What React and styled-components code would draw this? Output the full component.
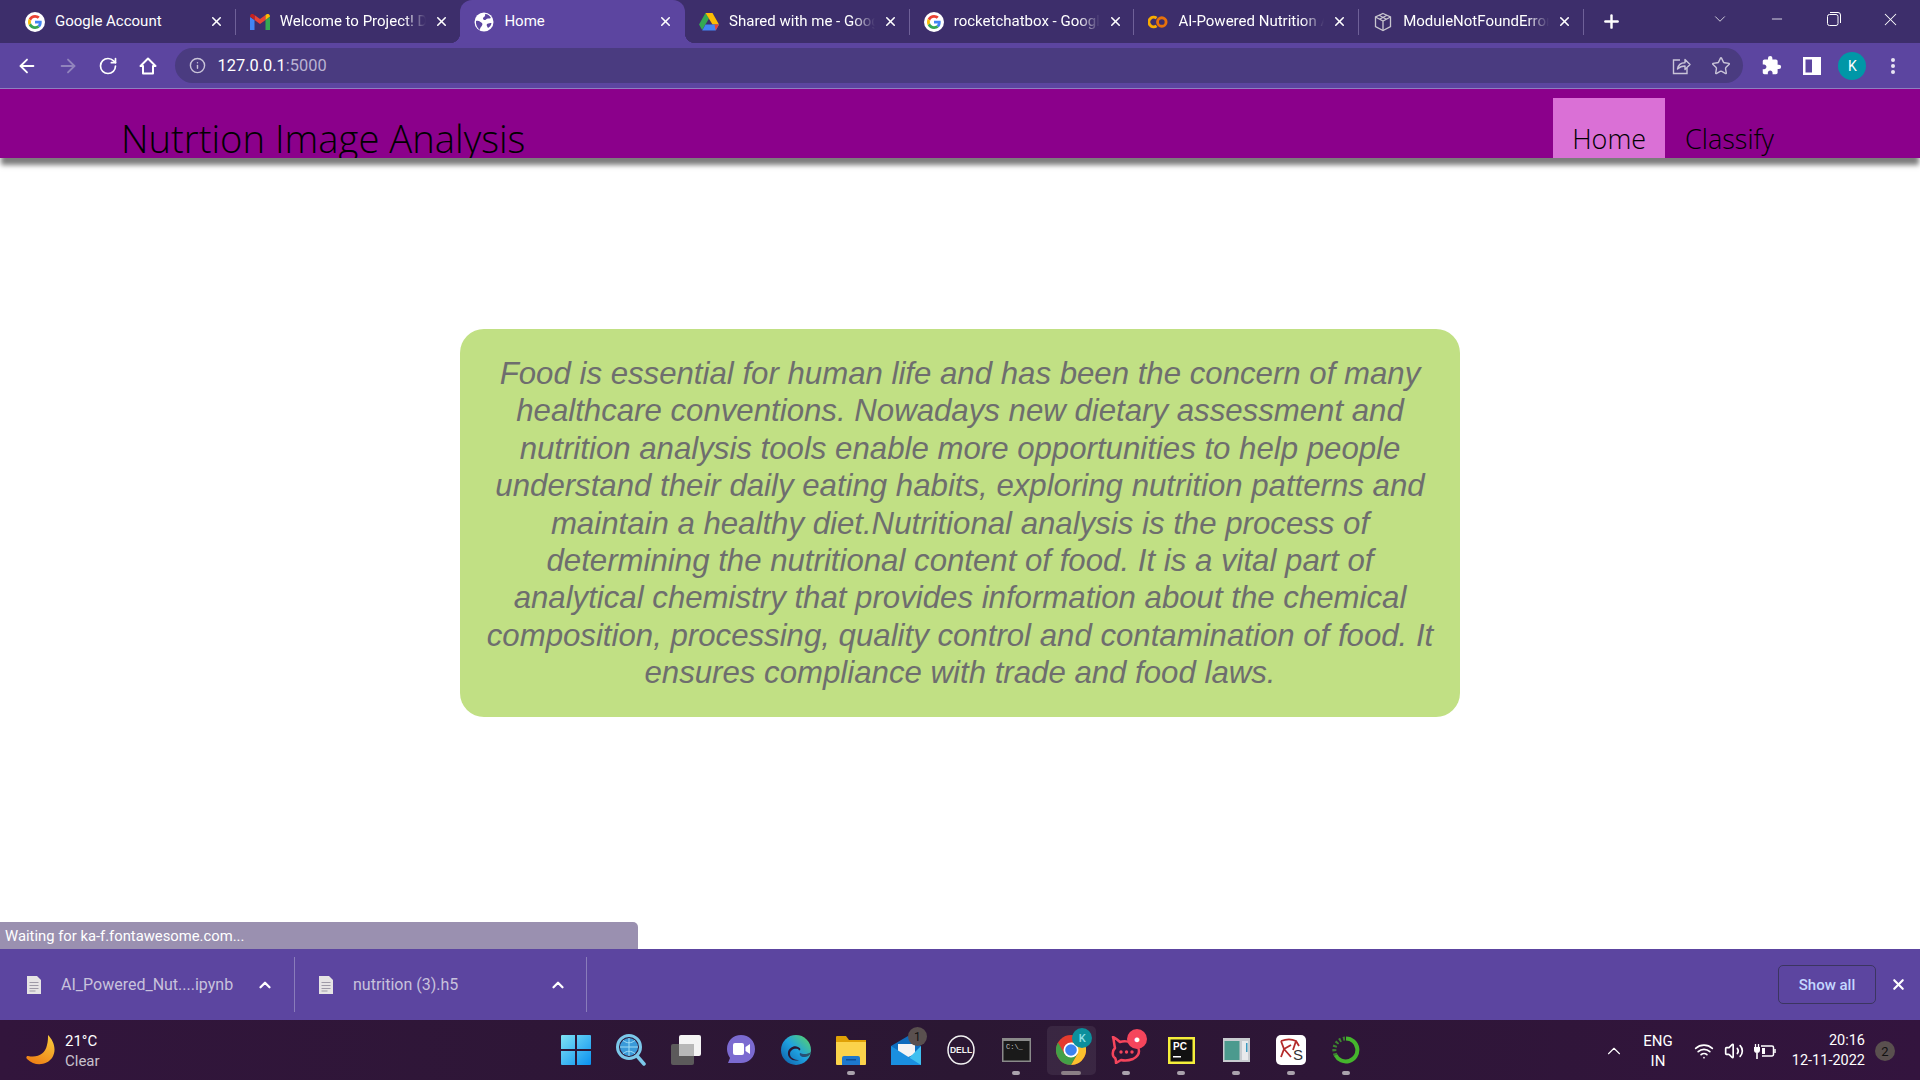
import React from 'react'
import styled, { createGlobalStyle } from 'styled-components'
import { ArrowLeft, ArrowRight, RotateCw, Info, Star, X, Plus, ChevronDown, ChevronUp, Minus, Wifi, Volume2 } from 'lucide-react'
import { MdExtension } from 'react-icons/md'

const GlobalStyle = createGlobalStyle`
  html, body {
    margin: 0;
    padding: 0;
    overflow: hidden;
  }
  * {
    box-sizing: border-box;
  }
`

const Screen = styled.div`
  width: 1920px;
  height: 1080px;
  display: flex;
  flex-direction: column;
  background: #fff;
  font-family: Roboto, "Noto Sans", sans-serif;
  overflow: hidden;
`

/* browser chrome */

const TabStrip = styled.div`
  height: 43px;
  flex: none;
  display: flex;
  padding-left: 11px;
  background: #3d2e6b;
  color: #fff;
`

const Tab = styled.div`
  position: relative;
  width: 224.7px;
  height: 43px;
  flex: none;
  display: flex;
  align-items: center;
  padding-left: 14px;
  background: ${p => (p.$active ? '#5c45a0' : 'transparent')};
  border-radius: ${p => (p.$active ? '12px 12px 0 0' : '0')};
  z-index: ${p => (p.$active ? 1 : 0)};

  &::after {
    content: ${p => (p.$sep ? "''" : 'none')};
    position: absolute;
    right: 0;
    top: 9px;
    height: 26px;
    width: 1px;
    background: #6f6198;
  }

  &::before {
    content: ${p => (p.$active ? "''" : 'none')};
    position: absolute;
    left: -10px;
    right: -10px;
    bottom: 0;
    height: 10px;
    background:
      radial-gradient(circle at 0 0, transparent 10px, #5c45a0 10.5px) left / 10px 10px no-repeat,
      radial-gradient(circle at 100% 0, transparent 10px, #5c45a0 10.5px) right / 10px 10px no-repeat;
  }
`

const Favicon = styled.span`
  width: 20px;
  height: 20px;
  flex: none;
  display: flex;
  align-items: center;
  justify-content: center;
`

const TabTitle = styled.span`
  margin-left: 10px;
  width: 146px;
  flex: none;
  font-size: 15px;
  line-height: 20px;
  margin-top: -2px;
  white-space: nowrap;
  overflow: hidden;
  ${p => p.$fade && `
    -webkit-mask-image: linear-gradient(90deg, #000 85%, transparent 100%);
    mask-image: linear-gradient(90deg, #000 85%, transparent 100%);
  `}
`

const TabClose = styled.span`
  margin-left: 8px;
  display: flex;
  color: #fff;
`

const PlusButton = styled.div`
  width: 56px;
  display: flex;
  align-items: center;
  justify-content: center;
`

const WindowControls = styled.div`
  margin-left: auto;
  margin-right: 1px;
  display: flex;
  height: 38px;
`

const WindowButton = styled.div`
  width: 57px;
  display: flex;
  align-items: center;
  justify-content: center;
`

const Toolbar = styled.div`
  height: 46px;
  flex: none;
  display: flex;
  align-items: center;
  padding: 0 7px;
  background: #5c45a0;
  border-bottom: 1px solid #8f7fc0;
  color: #fff;
`

const ToolButton = styled.div`
  width: 40.4px;
  flex: none;
  display: flex;
  justify-content: center;
  color: ${p => (p.$dim ? '#9184bd' : '#fff')};
`

const Omnibox = styled.div`
  flex: 1;
  height: 35px;
  margin: 0 8px 0 6px;
  display: flex;
  align-items: center;
  padding: 0 12px 0 14px;
  border-radius: 18px;
  background: #4a3b80;
`

const SiteInfo = styled.span`
  display: flex;
  color: #c9c4d8;
`

const Url = styled.span`
  margin-left: 12px;
  font-size: 16.4px;
  color: #fff;
`

const UrlPort = styled.span`
  color: #b9b2d2;
`

const OmniActions = styled.div`
  margin-left: auto;
  display: flex;
  gap: 20px;
  color: #c9c4d8;
`

const Avatar = styled.div`
  width: 28px;
  height: 28px;
  border-radius: 50%;
  background: #0097a7;
  display: flex;
  align-items: center;
  justify-content: center;
  font-size: 14px;
  color: #fff;
`

/* the page itself */

const Header = styled.header`
  position: relative;
  z-index: 2;
  height: 69px;
  flex: none;
  display: flex;
  align-items: flex-end;
  justify-content: space-between;
  padding: 0 126px 0 121px;
  background: #8b008b;
  box-shadow: 0 8px 5px -1px #7c7c7c;
  color: #000;
  font-family: "Open Sans", "Noto Sans", sans-serif;
`

const Brand = styled.div`
  height: 60px;
  overflow: hidden;
  font-size: 38.2px;
  font-weight: 300;
  line-height: 80px;
  white-space: nowrap;
`

const Nav = styled.nav`
  display: flex;
`

const NavItem = styled.a`
  height: 60px;
  padding: 0 ${p => (p.$active ? 19 : 20)}px;
  background: ${p => (p.$active ? '#da70d6' : 'transparent')};
  font-size: 27px;
  font-weight: 300;
  line-height: 81px;
  overflow: hidden;
`

const Page = styled.main`
  position: relative;
  flex: 1;
  display: flex;
  justify-content: center;
  align-items: flex-start;
  padding-top: 171px;
`

const Card = styled.section`
  width: 1000px;
  height: 388px;
  padding: 26px 20px;
  border-radius: 24px;
  background: #c1e084;
  color: #6e6e6e;
  font-family: "Liberation Sans", Arial, sans-serif;
  font-size: 31.2px;
  font-style: italic;
  line-height: 37.4px;
  text-align: center;
`

const StatusBubble = styled.div`
  position: absolute;
  left: 0;
  bottom: 0;
  width: 638px;
  height: 27px;
  padding-left: 5px;
  display: flex;
  align-items: center;
  border-radius: 0 5px 0 0;
  background: #9a90b0;
  color: #fff;
  font-size: 14.8px;
`

/* download shelf */

const Shelf = styled.div`
  height: 71px;
  flex: none;
  display: flex;
  align-items: center;
  background: #5c45a0;
  color: #fff;
`

const DownloadItem = styled.div`
  width: ${p => p.$width}px;
  height: 55px;
  flex: none;
  display: flex;
  align-items: center;
  padding-left: ${p => p.$pad}px;
  border-right: 1px solid #8a7cbb;
`

const FileName = styled.span`
  margin-left: 20px;
  width: ${p => p.$width}px;
  font-size: 16px;
  color: #c8c2dc;
  white-space: nowrap;
`

const ShelfChevron = styled.span`
  display: flex;
  color: #fff;
`

const ShowAll = styled.button`
  margin-left: auto;
  width: 98px;
  height: 39px;
  border: 1px solid #3b3560;
  border-radius: 5px;
  background: transparent;
  color: #c4d7ff;
  font-family: Roboto, sans-serif;
  font-size: 15px;
  font-weight: 500;
`

const ShelfClose = styled.span`
  width: 44px;
  display: flex;
  justify-content: center;
`

/* windows taskbar */

const Taskbar = styled.footer`
  height: 60px;
  flex: none;
  display: grid;
  grid-template-columns: 1fr auto 1fr;
  align-items: center;
  background: linear-gradient(90deg, #32153c, #2b1733 50%, #33143e);
  color: #fff;
`

const Weather = styled.div`
  display: flex;
  align-items: center;
  padding-left: 26px;
  gap: 9px;
`

const WeatherText = styled.div`
  font-size: 15px;
  line-height: 20px;
  padding-top: 2px;
`

const WeatherSub = styled.div`
  color: #c9c2cc;
`

const Dock = styled.div`
  display: flex;
  padding-left: 2px;
`

const DockSlot = styled.div`
  position: relative;
  width: 55.07px;
  height: 49px;
  display: flex;
  align-items: center;
  justify-content: center;

  &::before {
    content: ${p => (p.$focused ? "''" : 'none')};
    position: absolute;
    left: 3px;
    right: 3px;
    top: 0;
    bottom: 0;
    border-radius: 5px;
    background: rgba(255, 255, 255, 0.07);
  }

  &::after {
    content: ${p => (p.$running || p.$focused ? "''" : 'none')};
    position: absolute;
    left: 50%;
    bottom: 0;
    width: ${p => (p.$focused ? 20 : 8)}px;
    height: 4px;
    transform: translateX(-50%);
    border-radius: 2px;
    background: ${p => (p.$focused ? '#8b7f86' : '#aaa2ad')};
  }
`

const IconWrap = styled.span`
  position: relative;
  display: flex;
`

const CountBadge = styled.span`
  position: absolute;
  top: -8px;
  right: -6px;
  width: 19px;
  height: 19px;
  border-radius: 50%;
  background: #5a504f;
  color: #111;
  font-size: 12px;
  display: flex;
  align-items: center;
  justify-content: center;
`

const AppBadge = styled.span`
  position: absolute;
  top: -7px;
  right: -6px;
  width: 20px;
  height: 20px;
  border-radius: 50%;
  background: ${p => p.$bg};
  color: ${p => p.$fg};
  font-size: 11px;
  font-weight: 500;
  display: flex;
  align-items: center;
  justify-content: center;
`

const Tray = styled.div`
  display: flex;
  align-items: center;
  justify-content: flex-end;
  padding: 2px 25px 0 0;
`

const TrayLang = styled.div`
  width: 40px;
  margin: 0 16px 0 13px;
  font-size: 15px;
  line-height: 20px;
  text-align: center;
`

const TrayIcons = styled.div`
  display: flex;
  align-items: center;
  gap: 10px;
`

const Clock = styled.div`
  margin-left: 9px;
  width: 80px;
  font-size: 14.5px;
  line-height: 20px;
  text-align: right;
`

const NotifyBadge = styled.span`
  margin-left: 10px;
  width: 20px;
  height: 20px;
  border-radius: 50%;
  background: #5a504f;
  color: #111;
  font-size: 13px;
  display: flex;
  align-items: center;
  justify-content: center;
`

/* drawn icons */

const GoogleIcon = () => (
  <svg width="20" height="20" viewBox="0 0 20 20">
    <circle cx="10" cy="10" r="10" fill="#fff" />
    <g transform="translate(3 3) scale(0.292)">
      <path fill="#EA4335" d="M24 9.5c3.54 0 6.71 1.22 9.21 3.6l6.85-6.85C35.9 2.38 30.47 0 24 0 14.62 0 6.51 5.38 2.56 13.22l7.98 6.19C12.43 13.72 17.74 9.5 24 9.5z" />
      <path fill="#4285F4" d="M46.98 24.55c0-1.57-.15-3.09-.38-4.55H24v9.02h12.94c-.58 2.96-2.26 5.48-4.78 7.18l7.73 6c4.51-4.18 7.09-10.36 7.09-17.65z" />
      <path fill="#FBBC05" d="M10.53 28.59c-.48-1.45-.76-2.99-.76-4.59s.27-3.14.76-4.59l-7.98-6.19C.92 16.46 0 20.12 0 24c0 3.88.92 7.54 2.56 10.78l7.97-6.19z" />
      <path fill="#34A853" d="M24 48c6.48 0 11.93-2.13 15.89-5.81l-7.73-6c-2.15 1.45-4.92 2.3-8.16 2.3-6.26 0-11.57-4.22-13.47-9.91l-7.98 6.19C6.51 42.62 14.62 48 24 48z" />
    </g>
  </svg>
)

const GmailIcon = () => (
  <svg width="20" height="16" viewBox="0 0 20 16">
    <path fill="#4285F4" d="M0 3v13h4.5V6z" />
    <path fill="#34A853" d="M15.5 6v10H20V3z" />
    <path fill="#EA4335" d="M4.5 6 10 10l5.5-4V1L10 5 4.5 1z" />
    <path fill="#C5221F" d="M0 2.5 4.5 6V1L3 0C1.400 -.6 0 .8 0 2.500z" />
    <path fill="#FBBC04" d="M20 2.500 15.500 6V1L17 0c1.600-.6 3 .8 3 2.500z" />
  </svg>
)

const GlobeIcon = () => (
  <svg width="20" height="20" viewBox="0 0 20 20">
    <circle cx="10" cy="10" r="9.500" fill="#fff" />
    <path fill="#5c45a0" d="M2 9c3-1 4 1 6 2 1 1 0 3-1 4-1 1-1 2-1 3C3 16 1.500 12 2 9zM11 2c3 0 5 2 6 4-2 1-4 0-5 1.500-1 1-3 .5-3-1C9 5 12 4.500 11 2zM13 12c2-1 3-1 4.500-1-.3 2-1.500 4-3.500 5-.5-1-2-3-1-4z" />
  </svg>
)

const DriveIcon = () => (
  <svg width="20" height="18" viewBox="0 0 20 18">
    <path fill="#34A853" d="M6.500 0 0 11.500 3.200 17 10 5.500z" />
    <path fill="#FBBC04" d="M6.500 0h7L20 11.500h-6.500z" />
    <path fill="#4285F4" d="M3.200 17.500 6.500 11.500H20l-3.300 6z" />
    <path fill="#EA4335" d="M16.700 17.500 20 11.500h-4.500z" />
  </svg>
)

const ColabIcon = () => (
  <svg width="21" height="14" viewBox="0 0 21 14" fill="none" strokeWidth="3">
    <path stroke="#F9AB00" d="M9 3a5 5 0 1 0 0 8" />
    <circle stroke="#E8710A" cx="14.500" cy="7" r="4.500" />
  </svg>
)

const CubeIcon = () => (
  <svg width="20" height="20" viewBox="0 0 20 20" fill="none" stroke="#c8c5cf" strokeWidth="1.300">
    <path d="M10 1.500 17.500 5v9.500L10 18.500 2.500 14.500V5z" />
    <path d="M2.500 5 10 9l7.500-4M10 9v9.500M6 3.200l7.500 4M14 3.200 6.500 7.200" />
  </svg>
)

const ReloadIcon = () => <RotateCw size={20} strokeWidth={2} />

const HomeIcon = () => (
  <svg width="20" height="20" viewBox="0 0 20 20" fill="none" stroke="#fff" strokeWidth="2" strokeLinejoin="round">
    <path d="M10 2.500 2.500 10H5v7.500h10V10h2.500z" />
  </svg>
)

const ShareIcon = () => (
  <svg width="19" height="19" viewBox="0 0 19 19" fill="none" stroke="currentColor" strokeWidth="1.400">
    <path d="M8 4H1.500v13.500H15V12" />
    <path d="M5.500 13c.6-4 3.500-6.300 7.500-6.300V3.500l5 5-5 5V10c-3 0-5.500 1-7.500 3z" strokeLinejoin="round" />
  </svg>
)

const SidePanelIcon = () => (
  <svg width="18" height="18" viewBox="0 0 18 18">
    <path fill="#fff" fillRule="evenodd" d="M0 0h18v18H0zM2.500 2.500v13h6.500v-13z" />
  </svg>
)

const DotsIcon = () => (
  <svg width="6" height="18" viewBox="0 0 6 18" fill="#e8e4f2">
    <circle cx="3" cy="3" r="2" />
    <circle cx="3" cy="9" r="2" />
    <circle cx="3" cy="15" r="2" />
  </svg>
)

const RestoreIcon = () => (
  <svg width="14" height="14" viewBox="0 0 14 14" fill="none" stroke="#fff" strokeWidth="1">
    <rect x="0.500" y="2.500" width="10.500" height="11" rx="2" />
    <path d="M3 .5h8a2.500 2.500 0 0 1 2.500 2.500v8" />
  </svg>
)

const FileIcon = () => (
  <svg width="14" height="18" viewBox="0 0 14 18">
    <path fill="#e6e4e4" d="M0 0h10l4 4v14H0z" />
    <path stroke="#9e9aa6" strokeWidth="1" d="M2.500 6.500h9M2.500 9.500h9M2.500 12.500h9M2.500 15h6" />
  </svg>
)

const BatteryIcon = () => (
  <svg width="22" height="18" viewBox="0 0 22 18" fill="none" stroke="#fff" strokeWidth="1.500">
    <path d="M7 4h11a1.500 1.500 0 0 1 1.500 1.500v7A1.500 1.500 0 0 1 18 14H8" />
    <path d="M21 7v4" />
    <path d="M8 6v6h3V6z" fill="#fff" stroke="none" />
    <path d="M1.500 2v3M4.500 2v3" strokeWidth="1.300" />
    <path d="M0 5h6v3a3 3 0 0 1-3 3 3 3 0 0 1-3-3z" fill="#fff" stroke="none" />
    <path d="M3 11v6" strokeWidth="1.600" />
  </svg>
)

const MoonIcon = () => (
  <svg width="30" height="30" viewBox="0 0 30 30">
    <defs>
      <linearGradient id="moon" x1="0.700" y1="0" x2="0.200" y2="1">
        <stop offset="0" stopColor="#f8c63a" />
        <stop offset="1" stopColor="#ee7d14" />
      </linearGradient>
    </defs>
    <path fill="url(#moon)" d="M22 0c6 6 9 15 4 23-5 7-17 9-25 1-1-1-1-3 1-3 10 2 17-2 19-11 1-4 1-7 1-10z" />
  </svg>
)

const StartIcon = () => (
  <svg width="30" height="30" viewBox="0 0 30 30">
    <defs>
      <linearGradient id="win" x1="0" y1="0" x2="1" y2="1">
        <stop offset="0" stopColor="#7fe3f5" />
        <stop offset="1" stopColor="#0a91f0" />
      </linearGradient>
    </defs>
    <path fill="url(#win)" d="M1 0h13v14H0V1a1 1 0 0 1 1-1zM16 0h13a1 1 0 0 1 1 1v13H16zM0 16h14v14H1a1 1 0 0 1-1-1zM16 16h14v13a1 1 0 0 1-1 1H16z" />
  </svg>
)

const SearchIcon = () => (
  <svg width="30" height="32" viewBox="0 0 30 32" fill="none">
    <circle cx="13" cy="13" r="11.500" stroke="#7cc8ea" strokeWidth="3" />
    <circle cx="13" cy="13" r="9" fill="#3a9ad9" />
    <path stroke="#9fdcf5" strokeWidth="1" d="M4 13h18M13 4v18M7 6.500c4 3 8 3 12 0M7 19.500c4-3 8-3 12 0" />
    <path stroke="#7cc8ea" strokeWidth="3.500" strokeLinecap="round" d="M21.500 22.500 28 30" />
  </svg>
)

const TaskViewIcon = () => (
  <svg width="30" height="30" viewBox="0 0 30 30">
    <rect x="0" y="9" width="23" height="21" rx="2" fill="#5c5a5b" />
    <rect x="8" y="0" width="22" height="21" rx="2" fill="#f4f4f4" />
    <rect x="8" y="9" width="15" height="12" fill="#b8b8b8" />
  </svg>
)

const TeamsIcon = () => (
  <svg width="30" height="32" viewBox="0 0 30 32">
    <path fill="#7b6ad0" d="M15 1c8 0 14 6 14 14s-6 14-14 14H2l2-5C2 21 1 18 1 15 1 7 7 1 15 1z" />
    <rect x="7" y="9" width="11" height="12" rx="2" fill="#fff" />
    <path fill="#fff" d="m19.500 13 4.500-3v10l-4.500-3z" />
  </svg>
)

const EdgeIcon = () => (
  <svg width="30" height="30" viewBox="0 0 30 30">
    <defs>
      <linearGradient id="edge" x1="0" y1="1" x2="1" y2="0">
        <stop offset="0" stopColor="#0c59a4" />
        <stop offset="0.500" stopColor="#1fa1e0" />
        <stop offset="1" stopColor="#5fd85f" />
      </linearGradient>
    </defs>
    <circle cx="15" cy="15" r="15" fill="url(#edge)" />
    <path fill="#2b1733" d="M17 14c-4-1-8 1-8 5 0 4 5 6 9 6-6 2-12-2-11-8 1-4 6-7 10-5 2 1 3 2 2 3-1 1-1 0-2-1z" />
    <path fill="#2b1733" d="M30 17c-1 4-4 5-7 5-3 0-5-2-4-4 2 1 7 2 11-1z" opacity="0.600" />
  </svg>
)

const FolderIcon = () => (
  <svg width="30" height="30" viewBox="0 0 30 30">
    <path fill="#e0a106" d="M0 2a1 1 0 0 1 1-1h9l3 4h17v6H0z" />
    <path fill="#fbd34b" d="M0 7h30v22a1 1 0 0 1-1 1H1a1 1 0 0 1-1-1z" />
    <path fill="#1d78cc" d="M6 30v-7a2 2 0 0 1 2-2h14a2 2 0 0 1 2 2v7z" />
    <rect x="10" y="24" width="10" height="1.500" fill="#0d4f96" />
  </svg>
)

const MailIcon = () => (
  <svg width="30" height="30" viewBox="0 0 30 30">
    <path fill="#0f6cbd" d="M0 11 17 1l13 10v19H0z" />
    <path fill="#f4f4f4" d="M7 9h17v10l-9 4-8-5z" />
    <path fill="#3fc0f0" d="M30 11v19H11z" />
    <path fill="#1a8fe0" d="M0 11v19h30L0 11z" />
  </svg>
)

const DellIcon = () => (
  <svg width="28" height="30" viewBox="0 0 28 30">
    <ellipse cx="14" cy="15" rx="13" ry="14" fill="none" stroke="#f2f2f2" strokeWidth="1.500" />
    <text x="14" y="18" fontFamily="Liberation Sans, sans-serif" fontSize="8.500" fontWeight="700" textAnchor="middle" fill="#f2f2f2">DELL</text>
  </svg>
)

const CmdIcon = () => (
  <svg width="29" height="24" viewBox="0 0 29 24">
    <rect width="29" height="24" fill="#8a8a8a" />
    <rect x="1.500" y="3" width="26" height="19.500" fill="#1a1a1a" />
    <text x="4" y="11" fontFamily="Liberation Mono, monospace" fontSize="7" fill="#c8c8c8">C:\_</text>
  </svg>
)

const ChromeIcon = () => (
  <svg width="30" height="30" viewBox="0 0 30 30">
    <circle cx="15" cy="15" r="15" fill="#e33b2e" />
    <path fill="#fbc02d" d="M15 30A15 15 0 0 0 28 7.500H15l6.500 11.300z" />
    <path fill="#43a047" d="M2 7.500A15 15 0 0 0 15 30l6.500-11.300H8.500z" />
    <circle cx="15" cy="15" r="7.500" fill="#fff" />
    <circle cx="15" cy="15" r="5.800" fill="#3b82f0" />
  </svg>
)

const RocketIcon = () => (
  <svg width="30" height="28" viewBox="0 0 30 28" fill="none" stroke="#f5455c" strokeWidth="2.500">
    <path d="M2 1c3 1 5 3 7 5 3-1 9-1 13 1 4 2 6 5 6 8s-2 6-6 8c-4 1.500-8 2-12 1l-5 3c0-2 0-4-1-5-3-2-3-7 0-10C3 8 3 4 2 1z" strokeLinejoin="round" />
    <g fill="#f5455c" stroke="none">
      <circle cx="10" cy="16" r="1.700" />
      <circle cx="15.500" cy="16" r="1.700" />
      <circle cx="21" cy="16" r="1.700" />
    </g>
  </svg>
)

const PyCharmIcon = () => (
  <svg width="27" height="27" viewBox="0 0 27 27">
    <rect width="27" height="27" fill="#f5ee3b" />
    <rect x="2.500" y="2.500" width="22" height="22" fill="#111" />
    <text x="5" y="13" fontFamily="Liberation Sans, sans-serif" fontSize="10" fontWeight="700" fill="#fff">PC</text>
    <rect x="5" y="19" width="8" height="1.500" fill="#fff" />
  </svg>
)

const WindowIcon = () => (
  <svg width="27" height="24" viewBox="0 0 27 24">
    <rect width="27" height="24" fill="#c8ccd0" />
    <rect x="1.500" y="3" width="15" height="19" fill="#4c9a8e" />
    <rect x="19" y="3" width="6" height="19" fill="#e8eaec" />
    <rect x="23" y="5" width="1.500" height="9" fill="#3c9ac0" />
  </svg>
)

const SlidesIcon = () => (
  <svg width="30" height="30" viewBox="0 0 30 30">
    <rect width="30" height="30" rx="5" fill="#fff" />
    <path fill="none" stroke="#b42a2a" strokeWidth="1.800" d="M5 6c5-2 11-2 15 0l-3 9M5 6l3 8-3 8M8 14l7 8M8 14l7-4M20 6l3 5" />
    <text x="17" y="25" fontFamily="Liberation Sans, sans-serif" fontSize="15" fill="#333">S</text>
  </svg>
)

const RingIcon = () => (
  <svg width="28" height="28" viewBox="0 0 28 28" fill="none">
    <path stroke="#45b52d" strokeWidth="4" d="M14 2.500A11.500 11.500 0 1 1 3.500 19" />
    <path stroke="#45b52d" strokeWidth="4" strokeDasharray="2 2" opacity="0.700" d="M3.500 19A11.500 11.500 0 0 1 14 2.500" />
  </svg>
)

const tabs = [
  { title: 'Google Account', icon: <GoogleIcon />, sep: true },
  { title: 'Welcome to Project! Dashboard', icon: <GmailIcon />, fade: true },
  { title: 'Home', icon: <GlobeIcon />, active: true },
  { title: 'Shared with me - Google Drive', icon: <DriveIcon />, fade: true, sep: true },
  { title: 'rocketchatbox - Google Search', icon: <GoogleIcon />, fade: true, sep: true },
  { title: 'AI-Powered Nutrition Analysis', icon: <ColabIcon />, fade: true, sep: true },
  { title: 'ModuleNotFoundError', icon: <CubeIcon />, fade: true, sep: true },
]

const dockItems = [
  { icon: <StartIcon /> },
  { icon: <SearchIcon /> },
  { icon: <TaskViewIcon /> },
  { icon: <TeamsIcon /> },
  { icon: <EdgeIcon /> },
  { icon: <FolderIcon />, running: true },
  { icon: <MailIcon />, count: '1' },
  { icon: <DellIcon /> },
  { icon: <CmdIcon />, running: true },
  { icon: <ChromeIcon />, focused: true, badge: 'K', badgeBg: '#0c8f9c', badgeFg: '#8fe0e8' },
  { icon: <RocketIcon />, running: true, badge: '●', badgeBg: '#f5455c', badgeFg: '#fff' },
  { icon: <PyCharmIcon />, running: true },
  { icon: <WindowIcon />, running: true },
  { icon: <SlidesIcon />, running: true },
  { icon: <RingIcon />, running: true },
]

const text = 'Food is essential for human life and has been the concern of many healthcare conventions. Nowadays new dietary assessment and nutrition analysis tools enable more opportunities to help people understand their daily eating habits, exploring nutrition patterns and maintain a healthy diet.Nutritional analysis is the process of determining the nutritional content of food. It is a vital part of analytical chemistry that provides information about the chemical composition, processing, quality control and contamination of food. It ensures compliance with trade and food laws.'

export default function App() {
  return (
    <Screen>
      <GlobalStyle />
      <TabStrip>
        {tabs.map(t => (
          <Tab key={t.title} $active={t.active} $sep={t.sep}>
            <Favicon>{t.icon}</Favicon>
            <TabTitle $fade={t.fade}>{t.title}</TabTitle>
            <TabClose><X size={15} strokeWidth={2.5} /></TabClose>
          </Tab>
        ))}
        <PlusButton><Plus size={21} strokeWidth={2.8} /></PlusButton>
        <WindowControls>
          <WindowButton><ChevronDown size={18} strokeWidth={1} /></WindowButton>
          <WindowButton><Minus size={16} strokeWidth={1.2} /></WindowButton>
          <WindowButton><RestoreIcon /></WindowButton>
          <WindowButton><X size={21} strokeWidth={1.2} /></WindowButton>
        </WindowControls>
      </TabStrip>

      <Toolbar>
        <ToolButton><ArrowLeft size={22} /></ToolButton>
        <ToolButton $dim><ArrowRight size={22} /></ToolButton>
        <ToolButton><ReloadIcon /></ToolButton>
        <ToolButton><HomeIcon /></ToolButton>
        <Omnibox>
          <SiteInfo><Info size={17} /></SiteInfo>
          <Url>127.0.0.1<UrlPort>:5000</UrlPort></Url>
          <OmniActions>
            <ShareIcon />
            <Star size={20} strokeWidth={1.7} />
          </OmniActions>
        </Omnibox>
        <ToolButton><MdExtension size={21} /></ToolButton>
        <ToolButton><SidePanelIcon /></ToolButton>
        <ToolButton><Avatar>K</Avatar></ToolButton>
        <ToolButton><DotsIcon /></ToolButton>
      </Toolbar>

      <Header>
        <Brand>Nutrtion Image Analysis</Brand>
        <Nav>
          <NavItem $active>Home</NavItem>
          <NavItem>Classify</NavItem>
        </Nav>
      </Header>

      <Page>
        <Card>{text}</Card>
        <StatusBubble>Waiting for ka-f.fontawesome.com...</StatusBubble>
      </Page>

      <Shelf>
        <DownloadItem $width={295} $pad={27}>
          <FileIcon />
          <FileName $width={195}>AI_Powered_Nut....ipynb</FileName>
          <ShelfChevron><ChevronUp size={18} strokeWidth={3} /></ShelfChevron>
        </DownloadItem>
        <DownloadItem $width={292} $pad={24}>
          <FileIcon />
          <FileName $width={196}>nutrition (3).h5</FileName>
          <ShelfChevron><ChevronUp size={18} strokeWidth={3} /></ShelfChevron>
        </DownloadItem>
        <ShowAll>Show all</ShowAll>
        <ShelfClose><X size={17} strokeWidth={3} /></ShelfClose>
      </Shelf>

      <Taskbar>
        <Weather>
          <MoonIcon />
          <WeatherText>
            21°C
            <WeatherSub>Clear</WeatherSub>
          </WeatherText>
        </Weather>
        <Dock>
          {dockItems.map((d, i) => (
            <DockSlot key={i} $running={d.running} $focused={d.focused}>
              <IconWrap>
                {d.icon}
                {d.count && <CountBadge>{d.count}</CountBadge>}
                {d.badge && <AppBadge $bg={d.badgeBg} $fg={d.badgeFg}>{d.badge}</AppBadge>}
              </IconWrap>
            </DockSlot>
          ))}
        </Dock>
        <Tray>
          <ChevronUp size={22} strokeWidth={1.2} />
          <TrayLang>ENG<br />IN</TrayLang>
          <TrayIcons>
            <Wifi size={20} />
            <Volume2 size={20} />
            <BatteryIcon />
          </TrayIcons>
          <Clock>20:16<br />12-11-2022</Clock>
          <NotifyBadge>2</NotifyBadge>
        </Tray>
      </Taskbar>
    </Screen>
  )
}
